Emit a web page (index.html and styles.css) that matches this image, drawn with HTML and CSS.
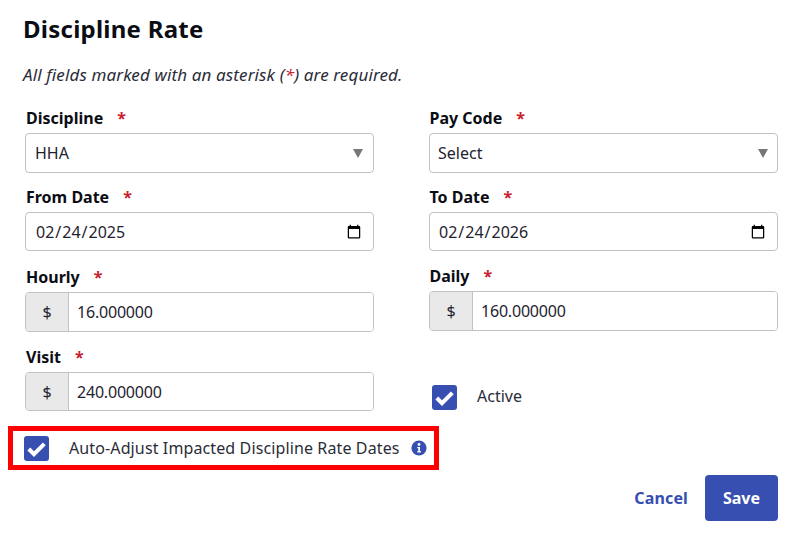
FILE: index.html
```html
<!DOCTYPE html>
<html lang="en">
<head>
<meta charset="utf-8">
<title>Discipline Rate</title>
<link rel="stylesheet" href="styles.css">
</head>
<body>
<main class="dialog">
  <h1 class="title">Discipline Rate</h1>
  <p class="note">All fields marked with an asterisk (<span class="req">*</span>) are required.</p>
  <div class="columns">
    <div class="col col-left">
      <div class="field f-select">
        <label class="label">Discipline<span class="star">*</span></label>
        <div class="select-wrap"><select class="control select"><option>HHA</option></select></div>
      </div>
      <div class="field f-date">
        <label class="label">From Date<span class="star">*</span></label>
        <input class="control date" type="date" value="2025-02-24">
      </div>
      <div class="field f-money">
        <label class="label">Hourly<span class="star">*</span></label>
        <div class="group"><span class="addon">$</span><input class="group-input" type="text" value="16.000000"></div>
      </div>
      <div class="field f-money-last">
        <label class="label">Visit<span class="star">*</span></label>
        <div class="group group-short"><span class="addon">$</span><input class="group-input" type="text" value="240.000000"></div>
      </div>
    </div>
    <div class="col col-right">
      <div class="field f-select">
        <label class="label">Pay Code<span class="star">*</span></label>
        <div class="select-wrap"><select class="control select"><option>Select</option></select></div>
      </div>
      <div class="field f-date">
        <label class="label">To Date<span class="star">*</span></label>
        <input class="control date" type="date" value="2026-02-24">
      </div>
      <div class="field f-money-right">
        <label class="label">Daily<span class="star">*</span></label>
        <div class="group"><span class="addon">$</span><input class="group-input" type="text" value="160.000000"></div>
      </div>
      <div class="active-row">
        <span class="check"><svg viewBox="0 0 25 25" width="25" height="25"><path d="M4.800 13l5.200 5.200L20.300 7.800" fill="none" stroke="#fff" stroke-width="4"/></svg></span>
        <span class="active-text">Active</span>
      </div>
    </div>
  </div>
  <div class="highlight">
    <span class="check"><svg viewBox="0 0 25 25" width="25" height="25"><path d="M4.800 13l5.200 5.200L20.300 7.800" fill="none" stroke="#fff" stroke-width="4"/></svg></span>
    <span class="auto-text">Auto-Adjust Impacted Discipline Rate Dates</span>
    <svg class="info" viewBox="0 0 16 16" width="16" height="16"><circle cx="8" cy="8" r="7.600" fill="#364fb0"/><circle cx="8" cy="4.500" r="1.400" fill="#fff"/><path d="M6.300 7h2.700v4.300h1v1.300H6.200v-1.300h1.100V8.300H6.300z" fill="#fff"/></svg>
  </div>
  <div class="actions">
    <a class="cancel" href="#">Cancel</a>
    <button class="save" type="button">Save</button>
  </div>
</main>
</body>
</html>
```
FILE: styles.css
```css
* { box-sizing: border-box; }
html, body { margin: 0; padding: 0; background: #fff; }
body {
  width: 796px;
  height: 537px;
  overflow: hidden;
  font-family: "Noto Sans", sans-serif;
  font-size: 16px;
  color: #1f2330;
}
.dialog { padding: 13px 18px 0 8px; }
.title {
  margin: 0 0 0 15px;
  font-size: 24px;
  line-height: 32px;
  font-weight: 700;
  letter-spacing: 0.24px;
  color: #0b0d14;
}
.note {
  margin: 18px 0 0 15px;
  font-size: 17px;
  letter-spacing: 0.13px;
  line-height: 24px;
  font-style: italic;
  color: #2a2d38;
}
.req { color: #c8202c; }
.columns {
  display: flex;
  gap: 55px;
  margin: 19px 0 0 17px;
}
.col { width: 349px; display: flex; flex-direction: column; }
.field { display: flex; flex-direction: column; }
.f-date { margin-top: 12px; }
.f-money { margin-top: 14px; }
.f-money-right { margin-top: 13px; }
.f-money-last { margin-top: 13px; }
.label {
  display: block;
  height: 27px;
  line-height: 24px;
  font-size: 16px;
  font-weight: 700;
  color: #0b0d14;
  padding-left: 1px;
}
.col-right .label { padding-left: 0.5px; }
.star {
  color: #c8202c;
  margin-left: 14px;
}
.control {
  display: block;
  width: 100%;
  font-family: inherit;
  font-size: 16px;
  color: #1f2330;
  background: #fff;
  border: 1px solid #c2c2c2;
  border-radius: 4px;
  outline: none;
}
.select-wrap { position: relative; }
.select-wrap::after {
  content: "";
  position: absolute;
  right: 11px;
  top: 16px;
  border-left: 5px solid transparent;
  border-right: 5px solid transparent;
  border-top: 9px solid #777;
}
.col-right .select-wrap::after { right: 10px; }
.select {
  height: 40px;
  padding: 0 30px 0 9px;
  appearance: none;
}
.col-right .select { padding-left: 8px; }
.date {
  height: 39px;
  padding: 0 9px 0 9px;
}
.col-right .date { padding-left: 8px; }
.group {
  display: flex;
  height: 40px;
  border: 1px solid #c2c2c2;
  border-radius: 4px;
  overflow: hidden;
}
.group-short { height: 39px; }
.addon {
  width: 43px;
  flex: none;
  display: flex;
  align-items: center;
  justify-content: center;
  background: #e9e9e9;
  border-right: 1px solid #c2c2c2;
  color: #1f2330;
}
.group-input {
  flex: 1;
  min-width: 0;
  border: 0;
  outline: none;
  padding: 0 8px;
  font-family: inherit;
  font-size: 16px;
  letter-spacing: -0.2px;
  color: #1f2330;
  background: #fff;
}
.active-row {
  display: flex;
  align-items: center;
  height: 25px;
  margin: 54px 0 0 3px;
}
.check {
  display: block;
  flex: none;
  width: 25px;
  height: 25px;
  background: #364fb0;
  border-radius: 3px;
}
.check svg { display: block; }
.active-text { margin: 0 0 3px 20px; line-height: 20px; color: #2a2d38; }
.highlight {
  display: flex;
  align-items: center;
  width: 431px;
  height: 44px;
  margin-top: 15px;
  padding-left: 11px;
  border: 5px solid #ff0000;
}
.auto-text { margin-left: 20px; line-height: 24px; letter-spacing: 0.12px; color: #2a2d38; white-space: nowrap; }
.info { flex: none; margin-left: 11px; }
.actions {
  display: flex;
  justify-content: flex-end;
  align-items: center;
  gap: 17px;
  margin-top: 5px;
}
.cancel {
  font-weight: 700;
  letter-spacing: 0.15px;
  color: #364fb0;
  text-decoration: none;
}
.save {
  width: 73px;
  height: 46px;
  border: 0;
  border-radius: 4px;
  background: #364fb0;
  color: #fff;
  font-family: inherit;
  font-size: 16px;
  font-weight: 700;
}
```
